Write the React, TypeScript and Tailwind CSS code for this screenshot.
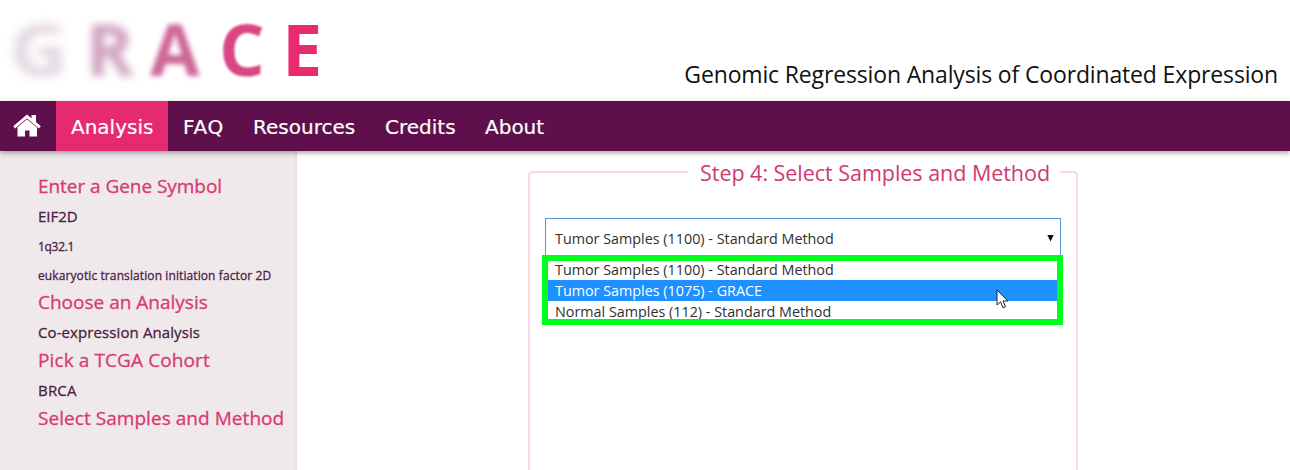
import React from 'react';

const logo = [
  { letter: 'G', style: 'w-[75px] text-[#d5c3d2] blur-[5px] opacity-70 translate-x-[3px] scale-x-110' },
  { letter: 'R', style: 'w-[64px] text-[#cf9dbd] blur-[4px]' },
  { letter: 'A', style: 'w-[69px] text-[#cf6698] blur-[2.5px]' },
  { letter: 'C', style: 'w-[63px] text-[#da4683] blur-[1px]' },
  { letter: 'E', style: 'w-[40px] text-[#e82a6e]' },
];

const tabs = [
  { label: 'Analysis', style: 'w-[112px] bg-[#e52a6f]' },
  { label: 'FAQ', style: 'w-[70px] tracking-[0.8px]' },
  { label: 'Resources', style: 'w-[132px]' },
  { label: 'Credits', style: 'w-[100px]' },
  { label: 'About', style: 'w-[89px]' },
];

const methods = [
  { label: 'Tumor Samples (1100) - Standard Method', style: 'h-[19px] leading-[18px] text-[#303030]' },
  { label: 'Tumor Samples (1075) - GRACE', style: 'h-[21px] leading-[22px] bg-[#1e90ff] text-white' },
  { label: 'Normal Samples (112) - Standard Method', style: 'h-[18px] leading-[22px] text-[#303030]' },
];

function HomeIcon() {
  return (
    <svg width="28" height="24" viewBox="0 0 28 24" fill="#fff">
      <path d="M14 5 24 13V22.5H16.500V16.500H12V22.5H4.500V13Z" />
      <path d="M14 .5 18.500 4.200V1H23V8L27.800 12.300 25.800 14.500 14 4.600 2.200 14.500 .2 12.300Z" />
      <path d="M3.600 13.600 14 4.900 24.400 13.600" fill="none" stroke="#5f134d" strokeWidth=".6" />
    </svg>
  );
}

function Cursor() {
  return (
    <svg className="absolute left-[448px] top-[28px]" width="13" height="21" viewBox="0 0 13 21">
      <path d="M1 1V16L4.500 12.800 7 18.800 9.500 17.700 7 12H11.800Z" fill="#fff" stroke="#20203a" strokeWidth="1" />
    </svg>
  );
}

export default function App() {
  return (
    <div className="flex h-[470px] w-[1290px] flex-col overflow-hidden bg-white font-['Open_Sans','Noto_Sans',sans-serif]">
      <header className="flex h-[101px] shrink-0 justify-between">
        <div className="flex pl-[11px] text-[72px] leading-[97px] font-bold">
          {logo.map((l) => (
            <span key={l.letter} className={l.style}>{l.letter}</span>
          ))}
        </div>
        <h1 className="pt-[58px] pr-[12px] text-[23px] leading-[32px] tracking-[-0.15px] whitespace-nowrap text-[#111]">
          Genomic Regression Analysis of Coordinated Expression
        </h1>
      </header>

      <nav className="relative z-10 flex h-[50px] shrink-0 bg-[#5f104c] font-['DejaVu_Sans',sans-serif] text-[20px] leading-[52px] text-white shadow-[0_2px_5px_rgba(0,0,0,0.35)] [-webkit-text-stroke:0.2px_white]">
        <a className="flex w-[56px] justify-center pt-[13px] pr-[2px]"><HomeIcon /></a>
        {tabs.map((t) => (
          <a key={t.label} className={`pl-[15px] whitespace-nowrap ${t.style}`}>{t.label}</a>
        ))}
      </nav>

      <div className="flex grow">
        <aside className="w-[297px] shrink-0 border-r-2 border-[#e7e2e4] bg-[#efe9eb] pt-[20px] pl-[38px] whitespace-nowrap text-[#4d1d43] [-webkit-text-stroke:0.3px_currentColor]">
          <h2 className="h-[30px] text-[19px] leading-[30px] tracking-[-0.05px] text-[#d93a71]">Enter a Gene Symbol</h2>
          <p className="h-[30px] text-[15px] leading-[30px]">EIF2D</p>
          <p className="h-[30px] text-[12px] leading-[31px] tracking-[-0.3px]">1q32.1</p>
          <p className="h-[26px] text-[12px] leading-[29px] tracking-[0.1px]">eukaryotic translation initiation factor 2D</p>
          <h2 className="h-[30px] text-[19px] leading-[30px] text-[#d93a71]">Choose an Analysis</h2>
          <p className="h-[28px] text-[15px] leading-[30px] tracking-[0.1px]">Co-expression Analysis</p>
          <h2 className="h-[30px] text-[19px] leading-[30px] tracking-[0.1px] text-[#d93a71]">Pick a TCGA Cohort</h2>
          <p className="h-[28px] text-[15px] leading-[30px] tracking-[0.2px]">BRCA</p>
          <h2 className="h-[30px] text-[19px] leading-[30px] tracking-[0.05px] text-[#d93a71]">Select Samples and Method</h2>
        </aside>

        <main className="pt-[8px] pl-[231px]">
          <fieldset className="h-[311px] w-[550px] rounded-t-[5px] border-2 border-b-0 border-[#f6d9e0] px-[15px]">
            <legend className="ml-[143px] h-[26px] w-[372px] pl-[12px] text-[21.5px] leading-[28px] tracking-[-0.03px] whitespace-nowrap text-[#d0396f]">
              Step 4: Select Samples and Method
            </legend>
            <div className="relative mt-[33px] h-[41px] w-[516px] border border-[#5e93d6] pl-[9px] text-[14.35px] leading-[39px] text-[#303030]">
              <div className="flex items-center justify-between pr-[6px]">
                <span>Tumor Samples (1100) - Standard Method</span>
                <svg width="7" height="7" viewBox="0 0 7 7"><path d="M.3 0H6.700L3.500 6.500Z" fill="#111" /></svg>
              </div>
              <div className="absolute top-[36px] left-[-4px] h-[70px] w-[521px] border-[6px] border-[#00ff1e] bg-white">
                {methods.map((m) => (
                  <div key={m.label} className={`overflow-hidden pl-[7px] whitespace-nowrap ${m.style}`}>{m.label}</div>
                ))}
                <Cursor />
              </div>
            </div>
          </fieldset>
        </main>
      </div>
    </div>
  );
}
